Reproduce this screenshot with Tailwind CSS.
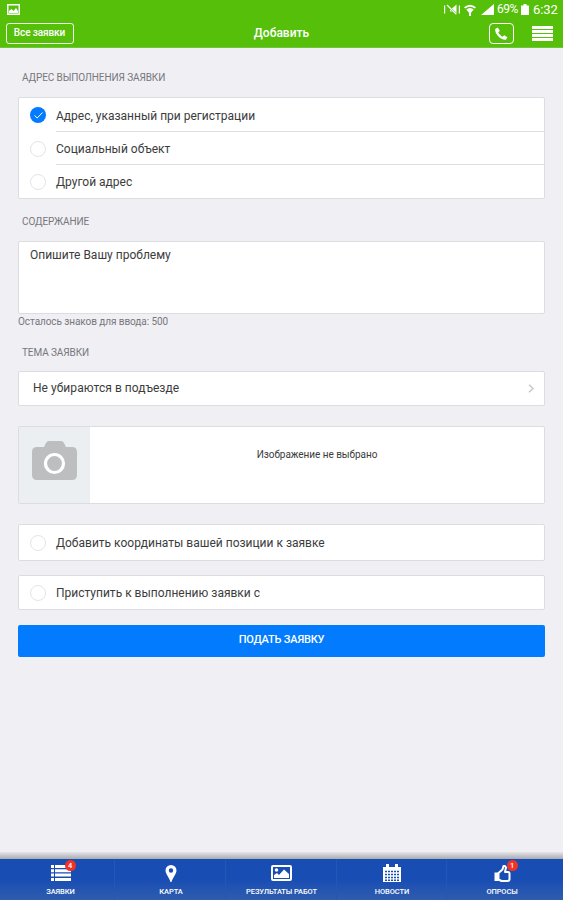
<!DOCTYPE html>
<html lang="ru">
<head>
  <meta charset="UTF-8" />
  <meta name="viewport" content="width=device-width, initial-scale=1.0" />
  <title>Добавить заявку</title>
  <script src="https://cdn.jsdelivr.net/npm/@tailwindcss/browser@4"></script>
</head>
<body class="flex flex-col h-[900px] overflow-hidden bg-[#efeff4] font-[Roboto,sans-serif] text-[#3c3c3c]">
  <!-- Header -->
  <header class="h-12 shrink-0 bg-[#55bf0a] text-white border-b border-[#6fc63a]">
    <!-- Status bar -->
    <div class="flex items-center justify-between h-[19px] pl-[7px] pr-[5px]">
      <svg class="w-[13px] h-[11px]" viewBox="0 0 13 11" fill="none" stroke="currentColor">
        <rect x="0.75" y="0.75" width="11.5" height="9.5" stroke-width="1.5" />
        <path d="M2 9 V7 L4.5 5 L6.5 7 L9 4 L11 7 V9 Z" fill="currentColor" stroke="none" />
      </svg>
      <div class="flex items-center leading-[19px]">
        <svg class="w-4 h-[11px] mr-1" viewBox="0 0 16 11" fill="currentColor">
          <path d="M0 1.500h1.200v8H0zM14.800 1.500H16v8h-1.200zM6 4h2.500l4-3.500v10L8.500 7.500H6z" />
          <path d="M3 1l9 9" stroke="#55bf0a" stroke-width="2.200" />
          <path d="M3 1l9 9" stroke="currentColor" stroke-width="1.200" />
        </svg>
        <svg class="w-3 h-3 mr-[5px]" viewBox="0 0 12 12" fill="currentColor">
          <path d="M0 3.200Q6-1.800 12 3.200L10.800 4.600Q6 .8 1.200 4.600z" />
          <path d="M2.300 5.600Q6 2.600 9.700 5.600L6.800 9H5.200z" />
          <rect x="5" y="9" width="2" height="3" />
        </svg>
        <svg class="w-[13px] h-[11px] mr-[3px]" viewBox="0 0 13 11" fill="currentColor"><path d="M0 11L13 0v11z" /></svg>
        <span class="w-[21px] mr-[3px] text-[12px] tracking-[-0.5px]">69%</span>
        <svg class="w-2 h-[11px] mr-1" viewBox="0 0 8 11" fill="currentColor"><path d="M2.500 0h3v1.500H8V11H0V1.500h2.500z" /></svg>
        <span class="w-[25px] text-[13px] tracking-[-0.1px]">6:32</span>
      </div>
    </div>
    <!-- Title bar -->
    <div class="grid grid-cols-3 items-center h-[29px] pl-[6px] pr-[10px]">
      <a class="justify-self-start flex items-center justify-center w-[68px] h-[21px] border border-white/90 rounded-[3px] text-[10px] font-medium tracking-[-0.1px] pr-px pb-[2px]">Все заявки</a>
      <h1 class="justify-self-center text-[12px] font-medium pl-[4px] pb-px">Добавить</h1>
      <div class="flex items-center justify-end gap-[18px]">
        <span class="flex items-center justify-center w-[25px] h-[21px] border-[1.5px] border-white rounded-[4px]">
          <svg class="w-[14px] h-[14px]" viewBox="0 0 24 24" fill="currentColor"><path d="M6.500 1L2 3.500C1 12 12 23 20.500 22L23 17.500 17.500 14 14.500 16.500C12 15.500 8.500 12 7.500 9.500L10 6.500z" /></svg>
        </span>
        <svg class="w-[21px] h-[15px]" viewBox="0 0 21 15" fill="currentColor"><path d="M0 0h21v3H0zM0 4h21v3H0zM0 8h21v3H0zM0 12h21v3H0z" /></svg>
      </div>
    </div>
  </header>

  <!-- Form -->
  <main class="flex-1 min-h-0 px-[18px] text-[12px]">
    <h2 class="mt-[22px] ml-1 h-4 leading-4 text-[10px] tracking-[-0.1px] text-[#77777c]">АДРЕС ВЫПОЛНЕНИЯ ЗАЯВКИ</h2>
    <ul class="mt-[11px] h-[102px] pl-[11px] bg-white border-[1.5px] border-[#dcdde0] rounded-[2px]">
      <li class="flex items-center h-[34px]">
        <span class="flex items-center justify-center w-4 h-4 rounded-full bg-[#027bff]">
          <svg class="w-[9px] h-[7px]" viewBox="0 0 9 7" fill="none" stroke="#fff" stroke-width="1"><path d="M0.500 3.500L3.200 6L8.500 0.500" /></svg>
        </span>
        <span class="flex-1 flex items-center h-full ml-[10px] pt-[2px] border-b border-[#dedee1]">Адрес, указанный при регистрации</span>
      </li>
      <li class="flex items-center h-[33px]">
        <span class="w-4 h-4 rounded-full border border-[#e4e4e6]"></span>
        <span class="flex-1 flex items-center h-full ml-[10px] pt-px border-b border-[#dedee1]">Социальный объект</span>
      </li>
      <li class="flex items-center h-[33px]">
        <span class="w-4 h-4 rounded-full border border-[#e4e4e6]"></span>
        <span class="ml-[10px]">Другой адрес</span>
      </li>
    </ul>

    <h2 class="mt-[15px] ml-1 h-4 leading-4 text-[10px] tracking-[-0.1px] text-[#77777c]">СОДЕРЖАНИЕ</h2>
    <div class="mt-[11px] h-[73px] pl-[11px] pt-[5px] bg-white border-[1.5px] border-[#dcdde0] rounded-[2px] leading-4">Опишите Вашу проблему</div>
    <p class="h-4 leading-4 text-[10px] tracking-[-0.07px] text-[#77777c]">Осталось знаков для ввода: 500</p>

    <h2 class="mt-[15px] ml-1 h-4 leading-4 text-[10px] tracking-[-0.1px] text-[#77777c]">ТЕМА ЗАЯВКИ</h2>
    <div class="flex items-center justify-between mt-[10px] h-[35px] pl-[14px] pr-[10px] bg-white border-[1.5px] border-[#dcdde0] rounded-[2px]">
      <span class="pb-px tracking-[0.05px]">Не убираются в подъезде</span>
      <svg class="w-[6px] h-[9px]" viewBox="0 0 6 9" fill="none" stroke="#c7c7cc" stroke-width="1.500"><path d="M1 0.800L5 4.500L1 8.200" /></svg>
    </div>

    <div class="flex mt-5 h-[78px] bg-white border-[1.5px] border-[#dcdde0] rounded-[2px]">
      <div class="flex justify-center w-[71px] pt-[14px] bg-[#eceff1]">
        <svg class="w-[45px] h-[39px]" viewBox="0 0 45 39">
          <path d="M5 6h7l2-4q1-2 3-2h12q2 0 3 2l2 4h6q5 0 5 5v23q0 5-5 5H5q-5 0-5-5V11q0-5 5-5z" fill="#bcbec0" />
          <circle cx="22.500" cy="22.500" r="9" fill="none" stroke="#fff" stroke-width="3.200" />
        </svg>
      </div>
      <p class="flex-1 pt-5 text-center leading-4 text-[10px] tracking-[-0.04px]">Изображение не выбрано</p>
    </div>

    <div class="flex items-center mt-5 h-[37px] pl-[11px] bg-white border-[1.5px] border-[#dcdde0] rounded-[2px]">
      <span class="w-4 h-4 rounded-full border border-[#e4e4e6]"></span>
      <span class="ml-[10px]">Добавить координаты вашей позиции к заявке</span>
    </div>
    <div class="flex items-center mt-[14px] h-[35px] pl-[11px] bg-white border-[1.5px] border-[#dcdde0] rounded-[2px]">
      <span class="w-4 h-4 rounded-full border border-[#e4e4e6]"></span>
      <span class="ml-[10px]">Приступить к выполнению заявки с</span>
    </div>
    <button class="block mt-[15px] w-full h-8 pb-px bg-[#027bff] rounded-[2px] text-white text-[11px] font-medium tracking-[-0.2px]">ПОДАТЬ ЗАЯВКУ</button>
  </main>

  <!-- Bottom tabs -->
  <div class="h-[7px] shrink-0 bg-linear-to-b from-[#e6e6ea] to-[#a9abb0]"></div>
  <nav class="grid grid-cols-[115px_111px_111px_110px_1fr] h-[41px] shrink-0 bg-linear-to-b from-[#184db3] via-[#184db3] to-[#2f5cae] text-white text-[7.5px] font-medium tracking-[-0.1px]">
    <a class="flex flex-col items-center pt-[6px] pl-[7px] border-r border-[#2456b8]">
      <span class="relative">
        <svg class="w-5 h-4" viewBox="0 0 20 16" fill="currentColor"><path d="M0 0h3v3H0zM4 0h16v3H4zM0 4.300h3v3H0zM4 4.300h16v3H4zM0 8.600h3v3H0zM4 8.600h16v3H4zM0 13h3v3H0zM4 13h16v3H4z" /></svg>
        <span class="absolute -top-[5px] left-[14px] w-[11px] h-[11px] rounded-full bg-[#f03328] text-center leading-[11px]">4</span>
      </span>
      <span class="mt-[6px] leading-[10px]">ЗАЯВКИ</span>
    </a>
    <a class="flex flex-col items-center pt-[6px] pl-[2px] border-r border-[#2456b8]">
      <svg class="w-3 h-[17px]" viewBox="0 0 12 17" fill="currentColor" fill-rule="evenodd"><path d="M6 0a5.500 5.500 0 0 1 5.500 5.500C11.500 9 7.500 13 6.500 17h-1C4.500 13 .5 9 .5 5.500A5.500 5.500 0 0 1 6 0zM6 3.300a2.200 2.200 0 1 0 0 4.400 2.200 2.200 0 0 0 0-4.400z" /></svg>
      <span class="mt-[5px] leading-[10px]">КАРТА</span>
    </a>
    <a class="flex flex-col items-center pt-[6px] pl-px border-r border-[#2456b8]">
      <svg class="w-[21px] h-4" viewBox="0 0 21 16" fill="currentColor">
        <rect x="1" y="1" width="19" height="14" rx="1" fill="none" stroke="currentColor" stroke-width="2" />
        <circle cx="5.500" cy="5" r="1.800" />
        <path d="M3 13v-3l3-2 2 2 5-5.500 5 4.500v4z" />
      </svg>
      <span class="mt-[6px] leading-[10px] whitespace-nowrap">РЕЗУЛЬТАТЫ РАБОТ</span>
    </a>
    <a class="flex flex-col items-center pt-[5px] pl-px border-r border-[#2456b8]">
      <svg class="w-[18px] h-[18px]" viewBox="0 0 18 18">
        <path d="M0 3h3V0h3v3h6V0h3v3h3v15H0z" fill="#fff" />
        <path d="M2 7.500h14M2 10.500h14M2 13.500h14M2 16.300h14" stroke="#184db3" stroke-width="1.500" stroke-dasharray="2 1" />
      </svg>
      <span class="mt-[5px] leading-[10px]">НОВОСТИ</span>
    </a>
    <a class="flex flex-col items-center pt-[6px] pr-[6px]">
      <span class="relative">
        <svg class="w-[17px] h-[17px]" viewBox="0 0 17 17" fill="none" stroke="currentColor" stroke-width="2" stroke-linejoin="round">
          <path d="M0.500 7.500h4v8.500h-4z" fill="currentColor" stroke="none" />
          <path d="M4.500 8L8.500 4.500L9.500 1H11l1 1.500-1 4.500H14q1.500 0 1.500 1.500V14q0 2-2 2H7.500l-3-1.500z" />
        </svg>
        <span class="absolute -top-[5px] left-[13px] w-[11px] h-[11px] rounded-full bg-[#f03328] text-center leading-[11px]">1</span>
      </span>
      <span class="mt-[5px] leading-[10px]">ОПРОСЫ</span>
    </a>
  </nav>
</body>
</html>
